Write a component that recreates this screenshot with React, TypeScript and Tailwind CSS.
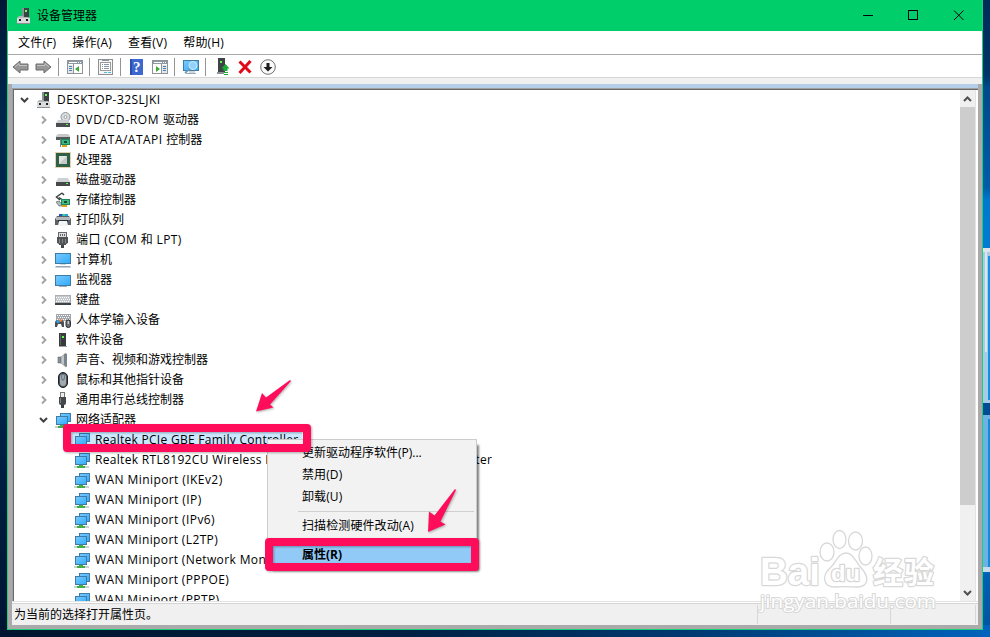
import React from "react";

type IconName =
  | "pc"
  | "dvd"
  | "ide"
  | "cpu"
  | "disk"
  | "storage"
  | "printer"
  | "port"
  | "computer"
  | "monitor"
  | "keyboard"
  | "hid"
  | "software"
  | "sound"
  | "mouse"
  | "usb"
  | "network";

type Device = { icon: IconName; prefix?: string; label: string; tracking?: string };

// tracking applies to the latin prefix when there is one, otherwise to the label
const CATEGORIES: Device[] = [
  { icon: "dvd", prefix: "DVD/CD-ROM ", label: "驱动器", tracking: "tracking-[0.66px]" },
  { icon: "ide", prefix: "IDE ATA/ATAPI ", label: "控制器", tracking: "tracking-[0.48px]" },
  { icon: "cpu", label: "处理器" },
  { icon: "disk", label: "磁盘驱动器" },
  { icon: "storage", label: "存储控制器" },
  { icon: "printer", label: "打印队列" },
  { icon: "port", label: "端口 (COM 和 LPT)", tracking: "tracking-[0.4px]" },
  { icon: "computer", label: "计算机" },
  { icon: "monitor", label: "监视器" },
  { icon: "keyboard", label: "键盘" },
  { icon: "hid", label: "人体学输入设备" },
  { icon: "software", label: "软件设备" },
  { icon: "sound", label: "声音、视频和游戏控制器" },
  { icon: "mouse", label: "鼠标和其他指针设备" },
  { icon: "usb", label: "通用串行总线控制器" },
];

const ADAPTERS = [
  { label: "Realtek PCIe GBE Family Controller", tracking: "tracking-[0.28px]" },
  {
    label: "Realtek RTL8192CU Wireless LAN 802.11n USB 2.0 Network Adapter",
    tracking: "tracking-[0.32px]",
  },
  { label: "WAN Miniport (IKEv2)", tracking: "tracking-[0.42px]" },
  { label: "WAN Miniport (IP)", tracking: "tracking-[0.42px]" },
  { label: "WAN Miniport (IPv6)", tracking: "tracking-[0.4px]" },
  { label: "WAN Miniport (L2TP)", tracking: "tracking-[0.38px]" },
  { label: "WAN Miniport (Network Monitor)", tracking: "tracking-[0.38px]" },
  { label: "WAN Miniport (PPPOE)", tracking: "tracking-[0.38px]" },
  { label: "WAN Miniport (PPTP)", tracking: "tracking-[0.38px]" },
];

const MENUS = ["文件(F)", "操作(A)", "查看(V)", "帮助(H)"];

const ICONS: Record<IconName, React.ReactNode> = {
  pc: (
    <>
      <rect x="6" y="0" width="7" height="10" fill="#3c4144" />
      <rect x="6" y="0" width="2" height="9" fill="#8a9093" />
      <rect x="9" y="2" width="2" height="2" fill="#6bff5c" />
      <path d="M1 10l2-2h4l1 1h4l2 1v5H1z" fill="#b3b7ba" />
      <rect x="1" y="10" width="13" height="5" fill="#d9dbdc" />
      <rect x="3" y="11" width="2" height="2" fill="#1d1d1d" />
      <rect x="10" y="11" width="2" height="2" fill="#1d1d1d" />
      <rect x="1" y="15" width="13" height="1" fill="#8b8f92" />
    </>
  ),
  dvd: (
    <>
      <circle cx="10.5" cy="5" r="4.5" fill="#dcdfe1" stroke="#8f9498" />
      <circle cx="10.5" cy="5" r="1.5" fill="#fff" stroke="#9aa0a4" />
      <path d="M3 8h10l2 3H1z" fill="#cdd0d3" />
      <rect x="1" y="11" width="14" height="4" fill="#4a4e51" />
      <rect x="11" y="12" width="2" height="1" fill="#55ff4c" />
    </>
  ),
  ide: (
    <>
      <path d="M3 2h10l2 2v2H1V4z" fill="#c5c9cc" />
      <rect x="1" y="5" width="14" height="3" fill="#55595c" />
      <rect x="5" y="7" width="1" height="8" fill="#7f8587" />
      <rect x="6" y="7" width="9" height="6" fill="#188a5a" />
      <rect x="7" y="8" width="7" height="4" fill="#3cb77f" />
      <rect x="9" y="9" width="3" height="2" fill="#174c39" />
      <rect x="7" y="13" width="5" height="2" fill="#dda11f" />
    </>
  ),
  cpu: (
    <>
      <rect x=".5" y=".5" width="15" height="15" fill="none" stroke="#c6a95a" strokeDasharray="1 1" />
      <rect x="1" y="1" width="14" height="14" fill="#2f6149" />
      <rect x="4" y="4" width="8" height="8" fill="#e3e5e3" />
      <path d="M4 12l8-8v8z" fill="#c5cac6" />
    </>
  ),
  disk: (
    <>
      <path d="M3 6h10l2 4H1z" fill="#cfd2d4" />
      <rect x="1" y="10" width="14" height="4" fill="#45494c" />
      <rect x="11" y="11" width="2" height="1" fill="#50ff48" />
    </>
  ),
  storage: (
    <>
      <path d="M7 1L1.5 5 5 8M7 1l2 2M4 5.5l3 2" fill="none" stroke="#3d4143" strokeWidth="1.5" />
      <path d="M1 10l3-1 3 3v2H4z" fill="#b6bbbe" stroke="#606568" strokeWidth=".7" />
      <rect x="6" y="7" width="9" height="6" fill="#188a5a" />
      <rect x="7" y="8" width="7" height="4" fill="#46b984" />
      <rect x="9" y="9" width="3" height="2" fill="#174c39" />
      <rect x="7" y="13" width="5" height="2" fill="#dda11f" />
    </>
  ),
  printer: (
    <>
      <rect x="4" y="2" width="9" height="3" fill="#1fa3e5" />
      <rect x="4" y="2" width="3" height="3" fill="#2255bb" />
      <rect x="8" y="2" width="2" height="3" fill="#57cb69" />
      <path d="M2 4h12l2 3v6H0V7z" fill="#5b6064" />
      <rect x="1" y="5" width="14" height="3" fill="#b2b7bb" />
      <rect x="3" y="8" width="10" height="2" fill="#2b2f31" />
      <path d="M4 9h8l1 5H3z" fill="#f2f5f7" />
    </>
  ),
  port: (
    <>
      <rect x="3.5" y=".5" width="8" height="5" fill="#ddd" stroke="#696969" />
      <path d="M5 2h1v2H5zM7 2h1v2H7zM9 2h1v2H9z" fill="#666" />
      <path d="M2 5h11v6l-2 1v1H4v-1l-2-1z" fill="#505356" />
      <path d="M4 7h1v4H4zM7 7h1v4H7zM10 7h1v4h-1z" fill="#85898c" />
      <rect x="6" y="13" width="3" height="3" fill="#414447" />
    </>
  ),
  computer: (
    <>
      <rect x=".5" y="1.5" width="15" height="10" fill="url(#screen)" stroke="#3f7ba3" />
      <rect x="5" y="12" width="6" height="1" fill="#d0dae2" />
      <path d="M1 14h14l1 1.5H0z" fill="#94a6b5" />
    </>
  ),
  monitor: (
    <>
      <rect x=".5" y="3.5" width="15" height="10" fill="url(#screen)" stroke="#3f7ba3" />
      <rect x="4" y="14" width="8" height="1" fill="#9baab6" />
    </>
  ),
  keyboard: (
    <>
      <rect x="0" y="3" width="16" height="8" fill="#a9afb5" />
      <rect x="1" y="4" width="14" height="6" fill="#c3c8cd" />
      <path d="M1 5.5h14M2 7.5h13M1 9.5h14" stroke="#fff" strokeDasharray="1 1" />
      <rect x="0" y="11" width="16" height="2" fill="#3f4347" />
    </>
  ),
  hid: (
    <>
      <rect x="1" y="2" width="15" height="7" fill="#a1a7ad" />
      <path d="M2 3.5h13M3 5.5h12M2 7.5h13" stroke="#fff" strokeDasharray="1 1" />
      <path d="M0 15v-4q0-3 3-3h3q3 0 3 3v4H7l-1-3H3l-1 3z" fill="#4b5055" />
      <circle cx="3" cy="9.5" r="1.6" fill="#20a9ff" />
      <circle cx="5.5" cy="8.5" r="1.4" fill="#ff7c2b" />
      <rect x="11" y="8" width="4.5" height="7.5" rx="2" fill="#6a6f73" stroke="#2c3033" />
      <rect x="12.7" y="9" width="1" height="3" fill="#eee" />
    </>
  ),
  software: (
    <>
      <rect x="4" y="1" width="7" height="13" fill="#373b3e" />
      <rect x="5" y="2" width="1" height="11" fill="#5e6366" />
      <rect x="7" y="4" width="2" height="2" fill="#60ff4c" />
      <rect x="4" y="14" width="8" height="1" fill="#9ca2a6" />
    </>
  ),
  sound: (
    <>
      <path d="M3 5h3v6H3z" fill="#87939b" stroke="#5a6165" strokeWidth=".6" />
      <path d="M6 5l5-4v14l-5-4z" fill="#c1c7cc" stroke="#777f84" strokeWidth=".6" />
      <path d="M9 2h3v13l-3-2z" fill="#7b858c" />
    </>
  ),
  mouse: (
    <>
      <rect x="3.5" y=".5" width="9" height="15" rx="4.5" fill="#4e5357" stroke="#1e2224" />
      <rect x="5" y="2" width="6" height="12" rx="3" fill="#a3aaaf" />
      <rect x="7" y="2" width="2" height="6" rx="1" fill="#e4edf2" stroke="#24394b" strokeWidth=".8" />
    </>
  ),
  usb: (
    <>
      <rect x="5.5" y=".5" width="4" height="5" fill="#eee" stroke="#777" />
      <path d="M4 5h7v6q0 2-2 2H6q-2 0-2-2z" fill="#44484a" />
      <rect x="5" y="6" width="1" height="5" fill="#7b8083" />
      <rect x="6" y="13" width="3" height="3" fill="#383c3e" />
    </>
  ),
  network: (
    <>
      <rect x="5.5" y="1.5" width="10" height="8" fill="url(#screen)" stroke="#3f7ba3" />
      <rect x="1.5" y="4.5" width="11" height="8" fill="url(#screen)" stroke="#3f7ba3" />
      <rect x="0" y="14" width="15" height="2" fill="#cdd1cf" />
      <path d="M5 13h4v1h2v2H3v-2h2z" fill="#3fae48" />
    </>
  ),
};

function DeviceIcon({ name, className = "" }: { name: IconName; className?: string }) {
  return (
    <svg width="16" height="16" viewBox="0 0 16 16" className={`shrink-0 ${className}`}>
      {ICONS[name]}
    </svg>
  );
}

function Chevron({ open = false }: { open?: boolean }) {
  return (
    <svg width="10" height="10" viewBox="0 0 10 10" className="shrink-0" fill="none">
      {open ? (
        <path d="M1 3l3.5 3.5L8 3" stroke="#404040" strokeWidth="2" />
      ) : (
        <path d="M3 1.5L6.500 5 3 8.500" stroke="#a3a3a3" strokeWidth="1.9" />
      )}
    </svg>
  );
}

function Wallpaper() {
  return (
    <svg width="990" height="637" className="absolute inset-0">
      <defs>
        <linearGradient id="floor" x1="0" x2="1" y1="0" y2="0">
          <stop offset="0" stopColor="#00152f" />
          <stop offset=".4" stopColor="#001f42" />
          <stop offset=".7" stopColor="#003a72" />
          <stop offset="1" stopColor="#0063bd" />
        </linearGradient>
        <linearGradient id="side" x1="0" x2="0" y1="0" y2="1">
          <stop offset="0" stopColor="#002a58" />
          <stop offset=".12" stopColor="#003468" />
          <stop offset=".14" stopColor="#00498c" />
          <stop offset=".3" stopColor="#005caa" />
          <stop offset=".32" stopColor="#0078d0" />
          <stop offset=".9" stopColor="#0086e0" />
          <stop offset=".92" stopColor="#0060b4" />
          <stop offset="1" stopColor="#0055a4" />
        </linearGradient>
        <linearGradient id="left" x1="0" x2="0" y1="0" y2="1">
          <stop offset="0" stopColor="#001637" />
          <stop offset=".2" stopColor="#00294f" />
          <stop offset=".6" stopColor="#00254b" />
          <stop offset="1" stopColor="#001431" />
        </linearGradient>
        <linearGradient id="screen" x1="0" x2="1" y1="0" y2="1">
          <stop offset="0" stopColor="#7bcaff" />
          <stop offset="1" stopColor="#2fabfb" />
        </linearGradient>
      </defs>
      <rect y="620" width="990" height="17" fill="url(#floor)" />
      <rect width="8" height="637" fill="url(#left)" />
      <rect x="982" width="8" height="625" fill="url(#side)" />
      <path d="M983 248h7v8h-2v144h2v3h-7z" fill="#a9cbe8" />
      <path d="M983 248h7v4h-3v100h-2V252h-2z" fill="#dfe3ea" />
      <rect x="988" y="256" width="2" height="144" fill="#0a93e8" />
      <rect x="983" y="403" width="7" height="12" fill="#004d96" />
      <path d="M983 415h7v4h-2v148h2v5h-7z" fill="#6fb1e4" />
      <path d="M983 567h7v5h-7z" fill="#c9dbea" />
      <rect x="988" y="419" width="2" height="148" fill="#0a8ce0" />
    </svg>
  );
}

function TitleBar() {
  return (
    <header className="flex h-[31px] shrink-0 items-center bg-[#00ce6b] pl-2">
      <DeviceIcon name="pc" />
      <h1 className="ml-[5px] text-xs text-black">设备管理器</h1>
      <svg width="102" height="11" viewBox="0 0 102 11" className="mr-[17px] ml-auto" fill="none" stroke="#000">
        <path d="M0 5.5h10" />
        <rect x="45.5" y=".5" width="9" height="9" />
        <path d="M91 .5l9.500 9.500M100.500 .5L91 10" />
      </svg>
    </header>
  );
}

function Separator() {
  return <div className="h-[18px] w-px bg-[#949494]" />;
}

function ArrowIcon({ flip = false }: { flip?: boolean }) {
  return (
    <svg width="17" height="14" viewBox="0 0 17 14" className={flip ? "-scale-x-100" : ""}>
      <path d="M1 7l7-6v3h8v6H8v3z" fill="#979797" stroke="#6b6b6b" />
      <path d="M3 7l4-3.500V5.500h8" fill="none" stroke="#c2c2c2" />
    </svg>
  );
}

function PaneIcon({ right = false }: { right?: boolean }) {
  return (
    <svg width="16" height="14" viewBox="0 0 16 14">
      <rect x=".5" y=".5" width="15" height="13" fill="#fff" stroke="#8d9499" />
      <rect x="1" y="1" width="14" height="3" fill="#8e99a3" />
      <path d="M2 2.5h8M11 2.5h1M13 2.5h1" stroke="#fff" />
      <rect x={right ? 10 : 1} y="5" width="5" height="8" fill="#e4e8eb" />
      <path d={right ? "M11 6.5h3M11 8.5h3M11 10.5h3" : "M2 6.5h3M2 8.5h3M2 10.5h3"} stroke="#4b7eb3" />
      <path d={right ? "M9.5 4v10" : "M6.5 4v10"} stroke="#8d9499" />
      <path d={right ? "M4 6l4 3-4 3z" : "M12 6L8 9l4 3z"} fill="#3daa35" />
    </svg>
  );
}

function ToolBar() {
  return (
    <div className="flex h-[23px] shrink-0 items-center border-b border-[#d7d7d7] bg-white pt-px pl-[4px]">
      <ArrowIcon />
      <div className="w-[6px]" />
      <ArrowIcon flip />
      <div className="w-[6px]" />
      <Separator />
      <div className="w-2" />
      <PaneIcon />
      <div className="w-[6px]" />
      <Separator />
      <div className="w-2" />
      <svg width="15" height="16" viewBox="0 0 15 16">
        <rect x=".5" y=".5" width="14" height="15" fill="#f5f5f5" stroke="#8f8f8f" />
        <rect x="2.5" y="3.5" width="10" height="8" fill="#fff" stroke="#9b9b9b" />
        <path d="M4 1.5h7M4 5.5h1M6 5.5h5M4 7.5h1M6 7.5h5M4 9.5h1M6 9.5h5" stroke="#8496a5" />
        <path d="M6 13.5h3M10 13.5h3" stroke="#52b9de" />
      </svg>
      <div className="w-[7px]" />
      <Separator />
      <div className="w-[9px]" />
      <svg width="13" height="16" viewBox="0 0 13 16">
        <rect width="13" height="16" fill="#2b4fb0" />
        <rect x="2" width="11" height="16" fill="#3d68cf" />
        <text x="3" y="13" fontSize="15" fill="#fff" className="font-['Liberation_Serif',serif] font-bold">?</text>
      </svg>
      <div className="w-[9px]" />
      <PaneIcon right />
      <div className="w-[6px]" />
      <Separator />
      <div className="w-2" />
      <svg width="17" height="16" viewBox="0 0 17 16">
        <rect x=".5" y="1.5" width="15" height="10" fill="url(#screen)" stroke="#437ca3" />
        <path d="M6 13h6M3 14.5h10" stroke="#9eabb5" />
        <circle cx="10" cy="6.5" r="4" fill="#8fd3fb" stroke="#d2e9f5" />
        <path d="M7 9.500L2 14" stroke="#6a9fc1" strokeWidth="1.8" />
      </svg>
      <div className="w-[5px]" />
      <Separator />
      <div className="w-[11px]" />
      <svg width="13" height="17" viewBox="0 0 13 17">
        <path d="M1 0h7v14H1z" fill="#3e4347" />
        <path d="M3 3h2v2H3z" fill="#67f74f" />
        <path d="M0 14h7v2H0z" fill="#8b9195" />
        <path d="M8.500 6l4 4.500h-2V13h-4v-2.500h-2zM7 14h4v1H7zM7 16h4v1H7z" fill="#1bae34" />
      </svg>
      <div className="w-[8px]" />
      <svg width="14" height="14" viewBox="0 0 14 14">
        <path d="M1.500 1.500l11 11M12.500 1l-11 12" stroke="#df0a17" strokeWidth="3" />
      </svg>
      <div className="w-2" />
      <svg width="16" height="16" viewBox="0 0 16 16">
        <circle cx="8" cy="8" r="7.3" fill="#fafafa" stroke="#707070" />
        <path d="M6.500 4h3v4h3L8 12.500 3.500 8h3z" fill="#1c1c1c" />
      </svg>
    </div>
  );
}

function DeviceTree() {
  return (
    <ul className="min-w-0 flex-1 overflow-hidden bg-white text-xs whitespace-nowrap text-black">
      <li className="flex h-5 items-center pl-[6px]">
        <Chevron open />
        <DeviceIcon name="pc" className="ml-[6px]" />
        <span className="ml-[5px] tracking-[0.45px]">DESKTOP-32SLJKI</span>
      </li>
      {CATEGORIES.map(({ icon, prefix, label, tracking = "" }) => (
        <li key={icon} className="flex h-5 items-center pl-[25px]">
          <Chevron />
          <DeviceIcon name={icon} className="ml-[6px]" />
          <span className={`ml-[5px] ${prefix ? "" : tracking}`}>
            {prefix && <span className={tracking}>{prefix}</span>}
            {label}
          </span>
        </li>
      ))}
      <li className="flex h-5 items-center pl-[25px]">
        <Chevron open />
        <DeviceIcon name="network" className="ml-[6px]" />
        <span className="ml-[5px]">网络适配器</span>
      </li>
      {ADAPTERS.map(({ label, tracking }, i) => (
        <li key={label} className="flex h-5 items-center pl-[57px]">
          <div className={`flex h-5 items-center pr-1 pl-[3px] ${i === 0 ? "bg-[#cce8ff]" : ""}`}>
            <DeviceIcon name="network" />
            <span className={`ml-[5px] ${tracking}`}>{label}</span>
          </div>
        </li>
      ))}
    </ul>
  );
}

function ScrollBar() {
  return (
    <div className="flex w-[15px] shrink-0 flex-col items-center bg-[#f0f0f0]">
      <svg width="15" height="17" viewBox="0 0 15 17" fill="none" stroke="#505050" strokeWidth="2">
        <path d="M4 11l3.500-3.500L11 11" />
      </svg>
      <div className="h-[398px] w-full bg-[#cdcdcd]" />
      <svg width="15" height="17" viewBox="0 0 15 17" className="mt-auto" fill="none" stroke="#505050" strokeWidth="2">
        <path d="M4 7l3.500 3.500L11 7" />
      </svg>
    </div>
  );
}

function StatusBar() {
  return (
    <footer className="flex h-[22px] shrink-0 border-t border-[#d5d5d5] bg-[#f0f0f0] py-px text-xs text-black">
      <p className="flex w-[745px] items-center pl-[2px]">为当前的选择打开属性页。</p>
      <div className="w-[133px] border-l border-[#d7d7d7]" />
      <div className="w-[86px] border-x border-[#d7d7d7]" />
    </footer>
  );
}

function ContextMenu() {
  return (
    <div className="absolute top-[439px] left-[267px] flex w-[210px] flex-col border border-[#ccc] bg-[#f2f2f2] py-[2px] text-xs text-black shadow-[4px_4px_2px_-2px_rgba(0,0,0,0.5)]">
      <div className="flex h-[22px] items-center pl-[34px]">更新驱动程序软件(P)...</div>
      <div className="flex h-[22px] items-center pl-[34px] tracking-[0.1px]">禁用(D)</div>
      <div className="flex h-[22px] items-center pl-[34px] tracking-[0.1px]">卸载(U)</div>
      <div className="mt-[3px] mr-[2px] mb-[3px] ml-[30px] h-px bg-[#d0d0d0]" />
      <div className="flex h-[22px] items-center pl-[34px] tracking-[0.1px]">扫描检测硬件改动(A)</div>
      <div className="mt-[3px] mr-[2px] mb-[3px] ml-[30px] h-px bg-[#d0d0d0]" />
      <div className="mx-[2px] flex h-[22px] items-center bg-[#91c9f7] pl-8 font-bold">属性(R)</div>
    </div>
  );
}

function Annotations() {
  return (
    <svg width="990" height="637" className="pointer-events-none absolute inset-0 drop-shadow-[1px_1px_1px_rgba(0,0,0,0.3)]">
      <g fill="none" stroke="#ff0d5b" strokeWidth="8" strokeLinejoin="round">
        <rect x="67" y="428" width="240" height="20" />
        <rect x="269" y="542" width="206" height="25" />
      </g>
      <g fill="#ff0d5b">
        <path d="M256 411.500l6-18.500 4 4.500 24-17.500 1 1-21 23.500 3.500 3z" />
        <path d="M428 532l1-20.500 5.500 4 20.500-26.500 1 1-15.500 31.500 5 3z" />
      </g>
    </svg>
  );
}

function Watermark() {
  return (
    <svg
      width="200"
      height="100"
      viewBox="0 0 200 100"
      className="pointer-events-none absolute top-[525px] left-[750px] font-['Liberation_Sans','Noto_Sans_CJK_SC',sans-serif]"
      fill="#fff"
      stroke="#d8d8d8"
      strokeWidth="1.3"
    >
      <ellipse cx="77" cy="27" rx="7" ry="9" />
      <ellipse cx="89.5" cy="14.5" rx="6.5" ry="9" />
      <ellipse cx="105.5" cy="16" rx="7" ry="9" />
      <ellipse cx="115.5" cy="31" rx="6.5" ry="9" />
      <path d="M96 28c7 0 9 8 16 16s7 17-4 18c-5 0-17-1-23 0-12 0-13-11-6-18 7-6 9-16 17-16z" />
      <g strokeLinejoin="round" paintOrder="stroke" strokeWidth="2.5" className="font-bold">
        <text x="10" y="60" fontSize="39" textLength="60" lengthAdjust="spacingAndGlyphs">Bai</text>
        <text x="81" y="56" fontSize="22" textLength="29" lengthAdjust="spacingAndGlyphs">du</text>
        <text x="123" y="58" fontSize="30" textLength="61">经验</text>
      </g>
      <text
        x="10"
        y="83"
        fontSize="19"
        textLength="176"
        lengthAdjust="spacingAndGlyphs"
        paintOrder="stroke"
        strokeWidth="2"
        className="font-['Open_Sans',sans-serif]"
      >
        jingyan.baidu.com
      </text>
    </svg>
  );
}

export default function App() {
  return (
    <main className="relative h-[637px] w-[990px] overflow-hidden bg-[#001b3c] font-['Open_Sans','Noto_Sans_CJK_SC',sans-serif]">
      <Wallpaper />
      <div className="relative ml-[7px] flex h-[630px] w-[976px] flex-col border-x border-b border-[#1bd176] bg-white">
        <TitleBar />
        <nav className="flex h-6 shrink-0 items-center gap-4 border-b border-[#a9a9a9] pl-[10px] text-xs tracking-[0.2px] text-black">
          {MENUS.map((menu) => (
            <span key={menu}>{menu}</span>
          ))}
        </nav>
        <ToolBar />
        <div className="h-[6px] shrink-0 bg-[#f0f0f0]" />
        <div className="flex min-h-0 flex-1 flex-col bg-[#aaa] px-1 pb-1">
          <div className="h-1 shrink-0 bg-[#b4cde8]" />
          <div className="h-px shrink-0 bg-[#a0a0a0]" />
          <div className="ml-px flex min-h-0 flex-1 border-t border-l border-[#696969] bg-white shadow-[-1px_0_0_#a0a0a0]">
            <DeviceTree />
            <ScrollBar />
            <div className="w-[3px] shrink-0 border-l border-[#e3e3e3] bg-white" />
          </div>
          <div className="h-[2px] shrink-0 border-t border-[#e3e3e3] bg-white" />
          <StatusBar />
        </div>
      </div>
      <ContextMenu />
      <Annotations />
      <Watermark />
    </main>
  );
}
